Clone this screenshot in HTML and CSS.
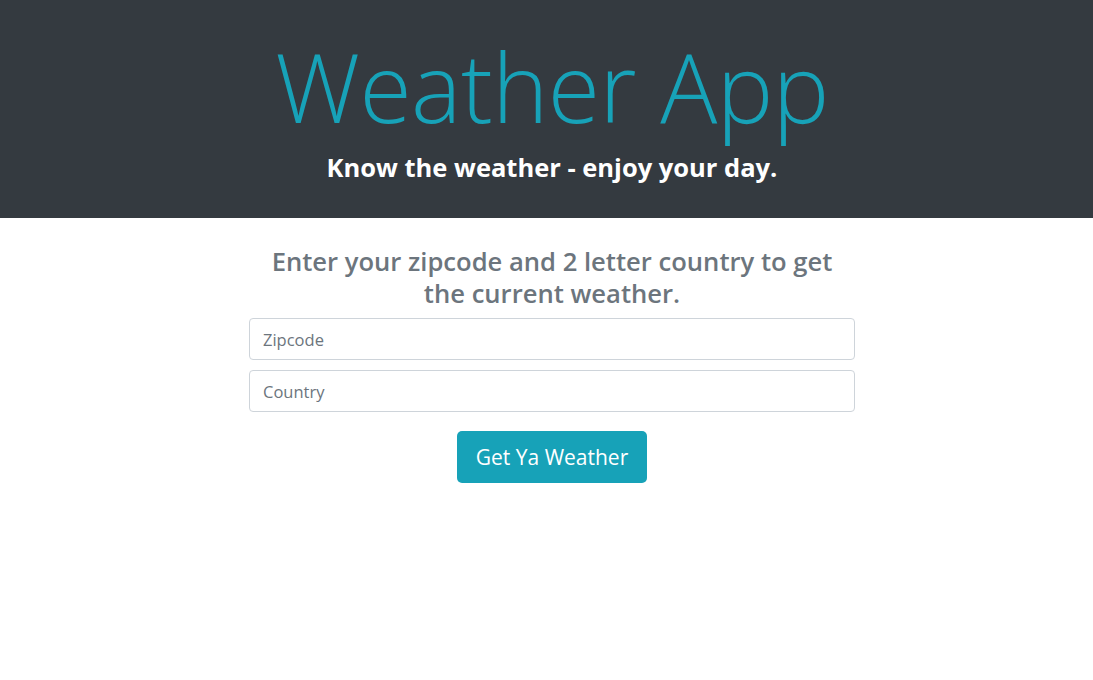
FILE: index.html
```html
<!DOCTYPE html>
<html lang="en">
<head>
<meta charset="utf-8">
<title>Weather App</title>
<link rel="stylesheet" href="styles.css">
</head>
<body>
<header class="hero">
  <h1 class="hero-title">Weather App</h1>
  <p class="hero-tagline">Know the weather - enjoy your day.</p>
</header>
<main class="panel">
  <h2 class="panel-heading">Enter your zipcode and 2 letter country to get the current weather.</h2>
  <form class="weather-form">
    <input class="field" type="text" placeholder="Zipcode">
    <input class="field" type="text" placeholder="Country">
    <button class="btn-go" type="button">Get Ya Weather</button>
  </form>
</main>
</body>
</html>
```
FILE: styles.css
```css
* { box-sizing: border-box; }
html, body { margin: 0; padding: 0; background: #fff; }
body {
  font-family: "Open Sans", "Noto Sans", sans-serif;
  color: #212529;
}
.hero {
  background: #343a40;
  height: 218px;
  display: flex;
  flex-direction: column;
  align-items: center;
  padding-left: 11px;
  padding-top: 36px;
}
.hero-title {
  margin: 0;
  font-weight: 300;
  font-size: 95px;
  line-height: 100px;
  color: #17a2b8;
  letter-spacing: -0.5px;
}
.hero-tagline {
  margin: 15px 0 0;
  font-weight: 700;
  font-size: 25.5px;
  line-height: 32px;
  color: #fff;
}
.panel {
  width: 606px;
  margin: 0 auto;
  position: relative;
  left: 5.5px;
  padding-top: 28px;
}
.panel-heading {
  margin: 0 auto 8px;
  width: 600px;
  text-align: center;
  font-weight: 600;
  font-size: 25.6px;
  line-height: 32px;
  color: #6c757d;
}
.weather-form {
  display: flex;
  flex-direction: column;
  align-items: center;
  gap: 10px;
}
.field {
  width: 100%;
  height: 42px;
  border: 1px solid #ced4da;
  border-radius: 4px;
  padding: 6px 13px;
  font-family: inherit;
  font-size: 16.5px;
  color: #495057;
  background: #fff;
}
.field::placeholder { color: #6c757d; }
.btn-go {
  margin-top: 9px;
  width: 190px;
  height: 52px;
  border: none;
  border-radius: 5px;
  background: #17a2b8;
  color: #fff;
  font-family: inherit;
  font-size: 21px;
  cursor: pointer;
}
```
